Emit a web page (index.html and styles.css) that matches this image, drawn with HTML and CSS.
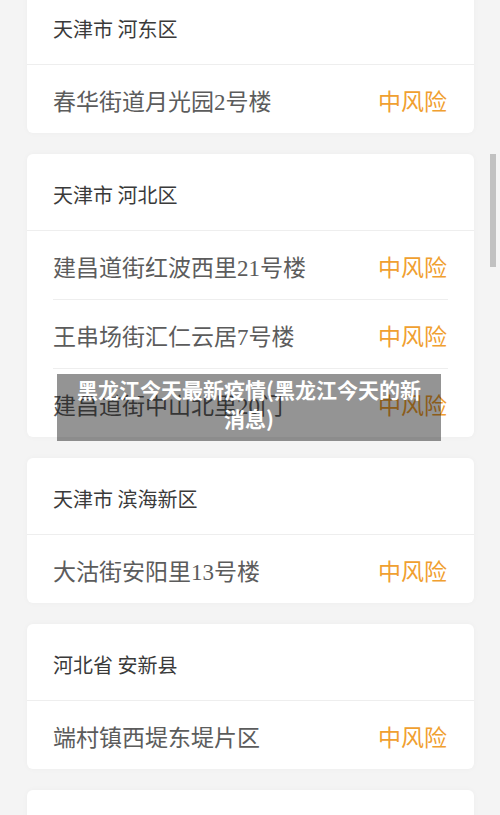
FILE: index.html
```html
<!DOCTYPE html>
<html lang="zh-CN">
<head>
    <meta charset="UTF-8">
    <meta name="viewport" content="width=device-width, initial-scale=1.0">
    <title>黑龙江今天最新疫情</title>
    <link rel="stylesheet" href="styles.css">
</head>
<body>
    <div class="risk-list">
        <div class="card">
            <div class="card-head">天津市 河东区</div>
            <div class="row"><span class="addr">春华街道月光园2号楼</span><span class="level">中风险</span></div>
        </div>
        <div class="card">
            <div class="card-head">天津市 河北区</div>
            <div class="row"><span class="addr">建昌道街红波西里21号楼</span><span class="level">中风险</span></div>
            <div class="row"><span class="addr">王串场街汇仁云居7号楼</span><span class="level">中风险</span></div>
            <div class="row"><span class="addr">建昌道街中山北里20门</span><span class="level">中风险</span></div>
        </div>
        <div class="card">
            <div class="card-head">天津市 滨海新区</div>
            <div class="row"><span class="addr">大沽街安阳里13号楼</span><span class="level">中风险</span></div>
        </div>
        <div class="card">
            <div class="card-head">河北省 安新县</div>
            <div class="row"><span class="addr">端村镇西堤东堤片区</span><span class="level">中风险</span></div>
        </div>
        <div class="card">
            <div class="card-head">&nbsp;</div>
        </div>
    </div>

    <div class="caption">黑龙江今天最新疫情(黑龙江今天的新消息)</div>
    <div class="scroll-thumb"></div>
</body>
</html>
```

FILE: styles.css
```css
body {
    margin: 0;
    padding: 0;
    background-color: #f4f4f4;
    font-family: "Noto Sans CJK SC", sans-serif;
    height: 815px;
    overflow: hidden;
}

.risk-list {
    display: flex;
    flex-direction: column;
    gap: 21px;
    margin-top: -12px;
    padding: 0 26px 0 27px;
}

.card {
    background-color: #ffffff;
    border-radius: 6px;
    box-shadow: 0 0 6px rgba(0, 0, 0, 0.03);
}

.card-head {
    height: 77px;
    box-sizing: border-box;
    padding: 4px 26px 0;
    display: flex;
    align-items: center;
    border-bottom: 1px solid #eeeeee;
    font-size: 20px;
    color: #3a3a3a;
}

.row {
    height: 68px;
    box-sizing: border-box;
    margin: 0 26px 0 26px;
    padding-top: 2px;
    display: flex;
    justify-content: space-between;
    align-items: center;
}

.row + .row {
    border-top: 1px solid #eeeeee;
    height: 69px;
}

.addr {
    font-family: "Liberation Serif", "Noto Sans CJK SC", serif;
    font-size: 23px;
    color: #5c5c5c;
}

.level {
    font-size: 23px;
    color: #f0a030;
    margin-right: 1px;
}

.caption {
    position: absolute;
    left: 57px;
    top: 374px;
    width: 384px;
    height: 67px;
    box-sizing: border-box;
    padding: 1px 12px 0;
    background-color: rgba(0, 0, 0, 0.42);
    color: #ffffff;
    font-size: 21px;
    font-weight: bold;
    line-height: 29px;
    text-align: center;
}

.scroll-thumb {
    position: absolute;
    left: 490px;
    top: 154px;
    width: 6px;
    height: 113px;
    background-color: #c1c1c1;
}
```
